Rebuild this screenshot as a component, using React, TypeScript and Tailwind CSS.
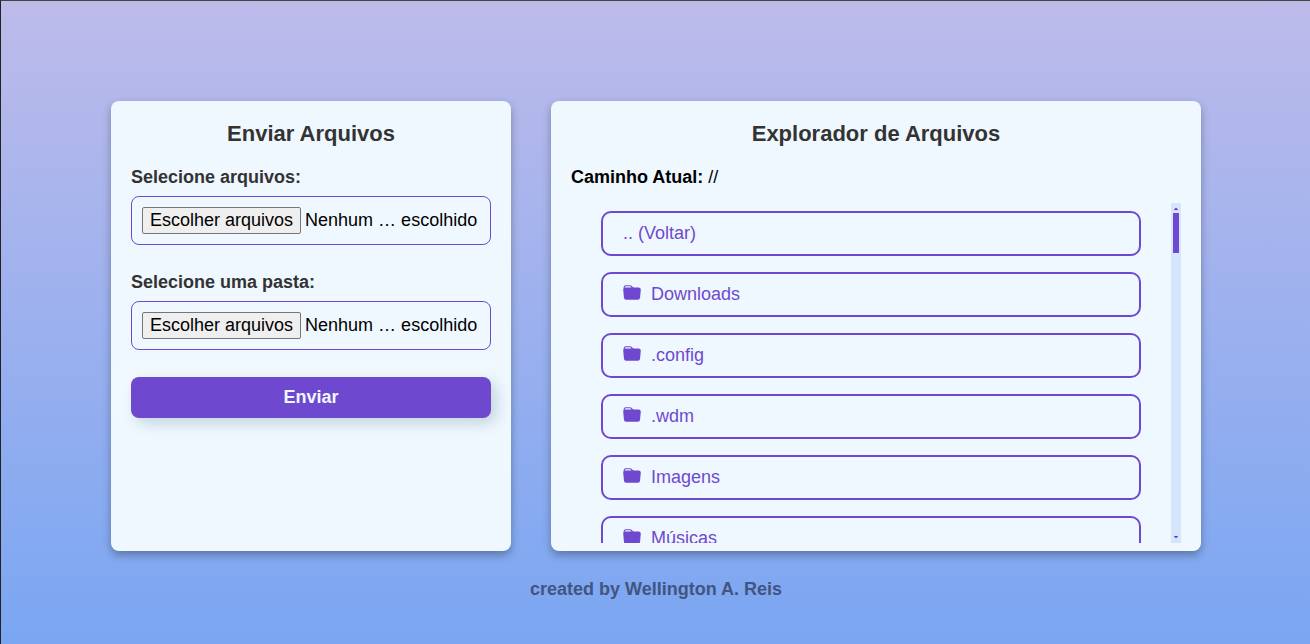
import { BsFolderFill } from "react-icons/bs";

const folders = ["Downloads", ".config", ".wdm", "Imagens", "Músicas"];

function FileField({ id, label, directory }: { id: string; label: string; directory?: boolean }) {
  const extra = directory ? { webkitdirectory: "" } : {};
  return (
    <div className="mb-[27px]">
      <label htmlFor={id} className="block font-bold leading-[21px] text-[#333]">
        {label}
      </label>
      <div className="relative mt-2 flex h-[49px] items-center gap-1 rounded-lg border border-[#6e49cf] px-2.5 whitespace-nowrap text-black">
        <span className="rounded-xs border border-[#767676] bg-[#efefef] px-[7px] py-0.5 leading-[21px]">
          Escolher arquivos
        </span>
        <span className="leading-[21px]">Nenhum … escolhido</span>
        <input
          id={id}
          type="file"
          multiple
          {...extra}
          className="absolute inset-0 h-full w-full cursor-pointer opacity-0"
        />
      </div>
    </div>
  );
}

function Scrollbar() {
  return (
    <div aria-hidden="true" className="flex w-2.5 shrink-0 flex-col items-center justify-between bg-[#d5e5fb]">
      <div className="flex flex-col items-center">
        <svg viewBox="0 0 10 10" className="size-2.5" fill="#6e49cf" shapeRendering="crispEdges">
          <path d="M4 5h2v1h1v1H3V6h1z" />
        </svg>
        <div className="h-10 w-1.5 bg-[#6e49cf]" />
      </div>
      <svg viewBox="0 0 10 10" className="size-2.5" fill="#6e49cf" shapeRendering="crispEdges">
        <path d="M3 3h4v1H6v1H4V4H3z" />
      </svg>
    </div>
  );
}

const itemClass =
  "flex h-[45px] items-center gap-2.5 rounded-[10px] border-2 border-[#6e49cf] px-5 pb-0.5 text-[#6e49cf]";

export default function App() {
  return (
    <div className="flex min-h-screen flex-col items-center border-t border-l border-t-[#444] border-l-[#222] bg-linear-to-b/srgb from-[#bdbbea] to-[#7aa6f2] pt-[100px] pl-px font-['Liberation_Sans',Arial,sans-serif] text-lg">
      <main className="flex w-full max-w-[1090px] gap-10">
        <section className="h-[450px] w-[400px] shrink-0 rounded-lg bg-[#f0f8ff] p-5 shadow-[0_4px_8px_rgba(0,0,0,0.3)]">
          <h2 className="mb-[21px] text-center text-[22px] leading-[25px] font-bold text-[#333]">
            Enviar Arquivos
          </h2>
          <form onSubmit={(e) => e.preventDefault()}>
            <FileField id="files" label="Selecione arquivos:" />
            <FileField id="folder" label="Selecione uma pasta:" directory />
            <button
              type="submit"
              className="h-[41px] w-full rounded-lg bg-[#6e49cf] pb-px font-bold text-[#f0f8ff] shadow-[5px_5px_15px_#c0d2dc,-5px_-5px_15px_#f5fcff]"
            >
              Enviar
            </button>
          </form>
        </section>
        <section className="flex h-[450px] min-w-0 grow flex-col rounded-lg bg-[#f0f8ff] px-5 pt-5 pb-2 shadow-[0_4px_8px_rgba(0,0,0,0.3)]">
          <h2 className="mb-[21px] text-center text-[22px] leading-[25px] font-bold text-[#333]">
            Explorador de Arquivos
          </h2>
          <p className="leading-[21px] text-black">
            <strong>Caminho Atual:</strong> //
          </p>
          <div className="mt-[15px] flex min-h-0 grow">
            <ul className="flex grow flex-col gap-4 overflow-hidden px-[30px] pt-2">
              <li>
                <a href="#" className={itemClass}>
                  .. (Voltar)
                </a>
              </li>
              {folders.map((name) => (
                <li key={name}>
                  <a href="#" className={itemClass}>
                    <BsFolderFill className="mb-0.5 size-[18px]" />
                    {name}
                  </a>
                </li>
              ))}
            </ul>
            <Scrollbar />
          </div>
        </section>
      </main>
      <footer className="py-6 font-bold text-[#425580]">created by Wellington A. Reis</footer>
    </div>
  );
}
